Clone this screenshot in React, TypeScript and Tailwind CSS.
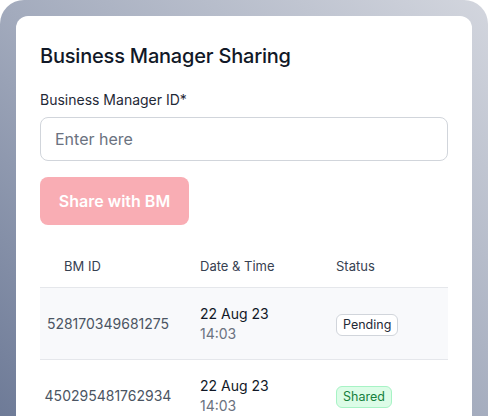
import React from "react";

const rows = [
  { id: "528170349681275", date: "22 Aug 23", time: "14:03", status: "Pending" },
  { id: "450295481762934", date: "22 Aug 23", time: "14:03", status: "Shared" },
];

export default function App() {
  return (
    <div className="w-[488px] h-[416px] overflow-hidden bg-white" style={{ fontFamily: "Inter, 'Noto Sans', sans-serif" }}>
      <div className="h-[440px] rounded-t-[24px] bg-gradient-to-tr from-[#6b7895] via-[#a3abbd] to-[#d3d6de] px-4 pt-4">
        <div className="h-[430px] rounded-xl bg-white px-6 pt-[26px]">
          <h1 className="text-[20px] font-medium leading-7 tracking-[-0.2px] text-[#111827]">Business Manager Sharing</h1>
          <label className="mt-[20px] block text-[14px] font-normal leading-5 text-[#1f2937]">Business Manager ID*</label>
          <input
            placeholder="Enter here"
            className="mt-[7px] block h-[44px] w-full rounded-lg border border-[#d1d5db] px-[14px] text-[16px] text-[#111827] placeholder:text-[#6b7280] outline-none"
          />
          <button className="mt-4 h-[48px] w-[149px] rounded-lg bg-[#f9adb4] text-[16px] font-semibold text-white">Share with BM</button>
          <div className="mt-4">
            <div className="grid h-[47px] grid-cols-3 items-center border-b border-[#e5e7eb] pt-[6px] text-[13px] text-[#374151]">
              <div className="px-6">BM ID</div>
              <div className="px-6">Date &amp; Time</div>
              <div className="px-6">Status</div>
            </div>
            {rows.map((r, i) => (
              <div
                key={r.id}
                className={`grid h-[72px] grid-cols-3 items-center border-b border-[#e5e7eb] ${i === 0 ? "bg-[#f8f9fb]" : "bg-white"}`}
              >
                <div className="text-center text-[14px] text-[#4b5563]">{r.id}</div>
                <div className="px-6">
                  <div className="text-[14px] leading-5 text-[#111827]">{r.date}</div>
                  <div className="text-[14px] leading-5 text-[#6b7280]">{r.time}</div>
                </div>
                <div className="px-6">
                  {r.status === "Pending" ? (
                    <span className="inline-block rounded-md border border-[#d1d5db] bg-white px-[6px] py-[1px] text-[12.5px] leading-[18px] text-[#1f2937]">Pending</span>
                  ) : (
                    <span className="inline-block rounded-md border border-[#a7f3c5] bg-[#dcfce7] px-[6px] py-[1px] text-[12.5px] leading-[18px] text-[#15803d]">Shared</span>
                  )}
                </div>
              </div>
            ))}
          </div>
        </div>
      </div>
    </div>
  );
}
